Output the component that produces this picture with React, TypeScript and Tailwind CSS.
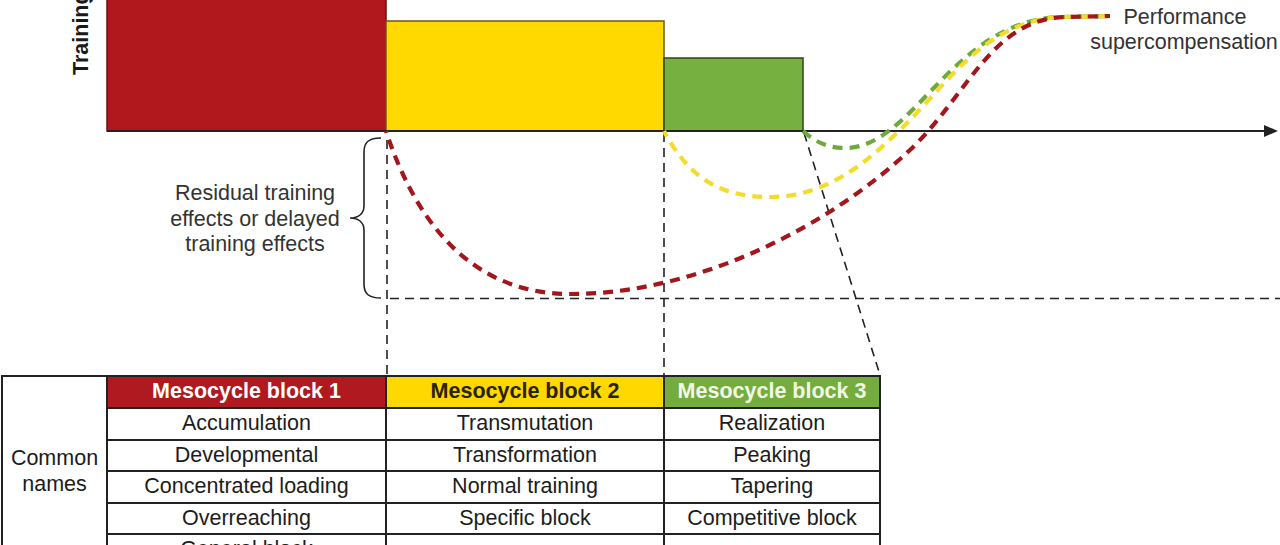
import React from "react";

const FONT = "'Liberation Sans', Arial, Helvetica, sans-serif";

function Chart() {
  return (
    <svg width="1280" height="375" viewBox="0 0 1280 375" className="block">
      {/* bars */}
      <rect x="107" y="-5" width="279" height="136" fill="#b1181e" stroke="#5e1612" strokeWidth="1.5" />
      <rect x="386" y="21" width="278" height="110" fill="#ffd900" stroke="#6b5a12" strokeWidth="1.5" />
      <rect x="664" y="58" width="139" height="73" fill="#76b041" stroke="#2e4619" strokeWidth="1.5" />

      {/* axis */}
      <line x1="107" y1="131" x2="1266" y2="131" stroke="#222" strokeWidth="2" />
      <polygon points="1264,125 1278,131 1264,137" fill="#222" />

      {/* dashed guides */}
      <g stroke="#222" strokeWidth="1.6" strokeDasharray="9 6" fill="none">
        <line x1="387" y1="140" x2="387" y2="375" />
        <line x1="664" y1="133" x2="664" y2="375" />
        <line x1="804" y1="133" x2="880" y2="375" />
        <line x1="390" y1="298.5" x2="1280" y2="298.5" />
      </g>

      {/* brace */}
      <path
        d="M381,138 C369,138 364,142 364,152 L364,206 C364,214 358,218 350,218 C358,218 364,222 364,230 L364,284 C364,294 369,298 381,298"
        stroke="#222"
        strokeWidth="1.6"
        fill="none"
      />

      {/* curves */}
      <g fill="none" strokeWidth="4.2" strokeDasharray="10 7">
        <path
          d="M803,131 C815,142 828,148 845,148 C868,148 886,134 902,120 C945,80 985,20 1060,17 L1110,16"
          stroke="#6fa83c"
        />
        <path
          d="M664,131 C690,180 722,197 770,197 C828,197 870,160 906,124 C950,80 988,20 1062,17 L1110,16"
          stroke="#f2dc2c"
          strokeDashoffset="4"
        />
        <path
          d="M386,131 C415,220 470,294 570,294 C700,294 830,225 910,150 C968,95 992,18 1066,17 L1110,16"
          stroke="#a3161c"
          strokeDashoffset="8"
        />
      </g>

      {/* labels */}
      <g fontFamily={FONT} fill="#333" fontSize="21.5">
        <text transform="translate(88,75) rotate(-90)" fontWeight="bold" fill="#1a1a1a">
          Training
        </text>
        <text x="255" y="200" textAnchor="middle">Residual training</text>
        <text x="255" y="226" textAnchor="middle">effects or delayed</text>
        <text x="255" y="251" textAnchor="middle">training effects</text>
        <text x="1185" y="24" textAnchor="middle">Performance</text>
        <text x="1184" y="49" textAnchor="middle">supercompensation</text>
      </g>
    </svg>
  );
}

const rows: [string, string, string][] = [
  ["Accumulation", "Transmutation", "Realization"],
  ["Developmental", "Transformation", "Peaking"],
  ["Concentrated loading", "Normal training", "Tapering"],
  ["Overreaching", "Specific block", "Competitive block"],
  ["General block", "", ""],
];

function Cell({ children }: { children?: React.ReactNode }) {
  return (
    <div className="flex items-center justify-center whitespace-nowrap bg-white leading-none text-[#1c1c1c]">
      {children}
    </div>
  );
}

function Table() {
  return (
    <div
      className="ml-[1px] grid w-fit grid-cols-[103px_277px_276px_214px] grid-rows-[30px_29.6px_29.6px_29.6px_29.6px_29.6px] gap-[2px] bg-[#222] p-[2px] text-[21.5px]"
      style={{ fontFamily: FONT }}
    >
      <div className="row-span-6 flex flex-col items-center justify-center bg-white text-center leading-[26px] text-[#1c1c1c]">
        <span>Common</span>
        <span>names</span>
      </div>
      <div className="flex items-center justify-center whitespace-nowrap bg-[#b0191f] font-bold leading-none text-white">
        Mesocycle block 1
      </div>
      <div className="flex items-center justify-center whitespace-nowrap bg-[#ffd800] font-bold leading-none text-[#2a2200]">
        Mesocycle block 2
      </div>
      <div className="flex items-center justify-center whitespace-nowrap bg-[#74ad3e] font-bold leading-none text-[#f2f8e6]">
        Mesocycle block 3
      </div>
      {rows.map((r, i) => (
        <React.Fragment key={i}>
          <Cell>{r[0]}</Cell>
          <Cell>{r[1]}</Cell>
          <Cell>{r[2]}</Cell>
        </React.Fragment>
      ))}
    </div>
  );
}

export default function App() {
  return (
    <div className="h-[545px] w-[1280px] overflow-hidden bg-white">
      <Chart />
      <Table />
    </div>
  );
}
